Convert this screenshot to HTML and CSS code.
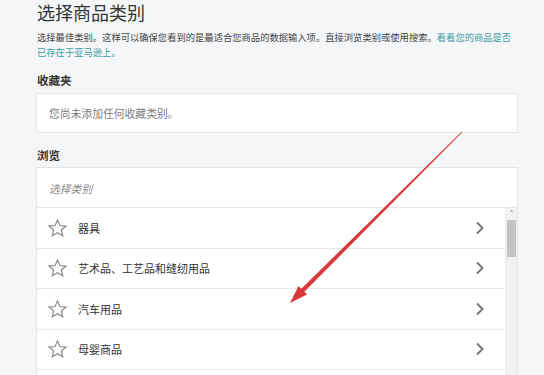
FILE: index.html
```html
<!DOCTYPE html>
<html lang="zh-CN">
<head>
<meta charset="utf-8">
<link rel="stylesheet" href="styles.css">
</head>
<body>
<div class="page">
  <h1 class="title">选择商品类别</h1>
  <p class="desc">选择最佳类别。这样可以确保您看到的是最适合您商品的数据输入项。直接浏览类别或使用搜索。<a class="link" href="#">看看您的商品是否<br>已存在于亚马逊上。</a></p>

  <h2 class="label">收藏夹</h2>
  <div class="fav-box">您尚未添加任何收藏类别。</div>

  <h2 class="label label-browse">浏览</h2>
  <div class="browse">
    <div class="search">选择类别</div>
    <div class="list-wrap">
      <ul class="list">
        <li class="row">
          <svg class="star" viewBox="0 0 20 19"><path d="M10 1.2 L12.6 6.9 L18.8 7.5 L14.1 11.6 L15.5 17.7 L10 14.5 L4.5 17.7 L5.9 11.6 L1.2 7.5 L7.4 6.9 Z"/></svg>
          <span class="name">器具</span>
          <svg class="chev" viewBox="0 0 10 14"><path d="M2 1.5 L7.5 7 L2 12.5"/></svg>
        </li>
        <li class="row">
          <svg class="star" viewBox="0 0 20 19"><path d="M10 1.2 L12.6 6.9 L18.8 7.5 L14.1 11.6 L15.5 17.7 L10 14.5 L4.5 17.7 L5.9 11.6 L1.2 7.5 L7.4 6.9 Z"/></svg>
          <span class="name">艺术品、工艺品和缝纫用品</span>
          <svg class="chev" viewBox="0 0 10 14"><path d="M2 1.5 L7.5 7 L2 12.5"/></svg>
        </li>
        <li class="row">
          <svg class="star" viewBox="0 0 20 19"><path d="M10 1.2 L12.6 6.9 L18.8 7.5 L14.1 11.6 L15.5 17.7 L10 14.5 L4.5 17.7 L5.9 11.6 L1.2 7.5 L7.4 6.9 Z"/></svg>
          <span class="name">汽车用品</span>
          <svg class="chev" viewBox="0 0 10 14"><path d="M2 1.5 L7.5 7 L2 12.5"/></svg>
        </li>
        <li class="row">
          <svg class="star" viewBox="0 0 20 19"><path d="M10 1.2 L12.6 6.9 L18.8 7.5 L14.1 11.6 L15.5 17.7 L10 14.5 L4.5 17.7 L5.9 11.6 L1.2 7.5 L7.4 6.9 Z"/></svg>
          <span class="name">母婴商品</span>
          <svg class="chev" viewBox="0 0 10 14"><path d="M2 1.5 L7.5 7 L2 12.5"/></svg>
        </li>
        <li class="row row-empty"></li>
      </ul>
      <div class="scrollbar">
        <span class="sb-up">&#708;</span>
        <span class="sb-thumb"></span>
      </div>
    </div>
  </div>
</div>
<svg class="arrow" viewBox="0 0 544 375" width="544" height="375">
  <polygon points="461.65,131.65 301.25,288.74 298.57,286.05 290,303 307.03,294.55 304.35,291.86 462.35,132.35"/>
</svg>
</body>
</html>
```
FILE: styles.css
```css
html, body {
  margin: 0;
  padding: 0;
  background: #f4f6f8;
  height: 375px;
  overflow: hidden;
}
body {
  font-family: "Noto Sans CJK SC", "Noto Sans", sans-serif;
  color: #333;
  position: relative;
}
.page {
  padding: 2px 26px 0 36px;
}
.title {
  margin: 0;
  font-size: 18px;
  font-weight: 400;
  line-height: 20px;
  color: #333;
  padding-left: 1px;
}
.desc {
  margin: 8px 0 0;
  font-size: 9.3px;
  line-height: 15px;
  color: #444;
  padding-left: 1px;
}
.link {
  color: #3f9ca6;
  text-decoration: none;
}
.label {
  margin: 12px 0 5px;
  font-size: 11.5px;
  font-weight: 700;
  line-height: 16px;
  color: #333;
  padding-left: 1px;
}
.label-browse {
  margin-top: 14px;
  margin-bottom: 4px;
}
.fav-box {
  height: 38px;
  border: 1px solid #e3e5e7;
  background: #fff;
  display: flex;
  align-items: center;
  padding-left: 12px;
  font-size: 10.8px;
  color: #7d7d7d;
}
.browse {
  border: 1px solid #e3e5e7;
  border-bottom: none;
  background: #fff;
}
.search {
  height: 39px;
  border-bottom: 1px solid #e3e5e7;
  display: flex;
  align-items: center;
  padding-left: 12px;
  font-size: 10.8px;
  font-style: italic;
  color: #8a8a8a;
}
.list-wrap {
  display: flex;
}
.list {
  list-style: none;
  margin: 0;
  padding: 0;
  flex: 1;
}
.row {
  height: 39.5px;
  border-bottom: 1px solid #e6e8ea;
  display: flex;
  align-items: center;
  padding-left: 11px;
  padding-right: 20px;
}
.star {
  width: 19px;
  height: 18px;
  flex: none;
}
.star path {
  fill: none;
  stroke: #8c8c8c;
  stroke-width: 1.3;
  stroke-linejoin: miter;
}
.name {
  margin-left: 11px;
  font-size: 11px;
  color: #333;
  flex: 1;
}
.chev {
  width: 10px;
  height: 14px;
  flex: none;
}
.chev path {
  fill: none;
  stroke: #777;
  stroke-width: 2;
}
.scrollbar {
  width: 11px;
  background: #f1f1f1;
  display: flex;
  flex-direction: column;
  align-items: center;
  border-left: 1px solid #ececec;
}
.sb-up {
  font-size: 9px;
  line-height: 12px;
  color: #333;
  height: 12px;
}
.sb-thumb {
  width: 9px;
  height: 37px;
  background: #c4c4c4;
}
.arrow {
  position: absolute;
  left: 0;
  top: 0;
  pointer-events: none;
}
.arrow polygon {
  fill: #d8393b;
}
```
